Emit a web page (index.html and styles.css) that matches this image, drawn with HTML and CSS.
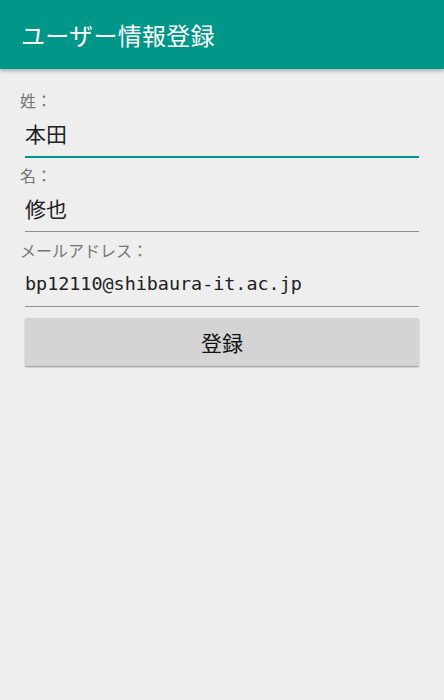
FILE: index.html
```html
<!DOCTYPE html>
<html lang="ja">
<head>
<meta charset="utf-8">
<link rel="stylesheet" href="styles.css">
</head>
<body>
<header class="appbar">
  <h1 class="title">ユーザー情報登録</h1>
</header>
<main class="form">
  <div class="field">
    <div class="label">姓：</div>
    <div class="input focused">本田</div>
  </div>
  <div class="field">
    <div class="label">名：</div>
    <div class="input">修也</div>
  </div>
  <div class="field">
    <div class="label">メールアドレス：</div>
    <div class="input mono">bp12110@shibaura-it.ac.jp</div>
  </div>
  <div class="button">登録</div>
</main>
</body>
</html>
```
FILE: styles.css
```css
* { box-sizing: border-box; }
html, body {
  margin: 0;
  padding: 0;
  background: #eeeeee;
  width: 444px;
  height: 700px;
  font-family: "Noto Sans CJK JP", "Noto Sans", sans-serif;
}
.appbar {
  height: 69px;
  background: #009688;
  box-shadow: 0 2px 4px rgba(0,0,0,0.28);
  display: flex;
  align-items: center;
  padding-left: 21px;
  position: relative;
  z-index: 1;
}
.title {
  margin: 0;
  color: #ffffff;
  font-weight: normal;
  font-size: 24px;
  line-height: 30px;
  letter-spacing: 0.3px;
}
.form {
  padding: 21px 25px 0 20px;
  display: flex;
  flex-direction: column;
}
.field {
  display: flex;
  flex-direction: column;
  margin-bottom: 7px;
}
.label {
  font-size: 16px;
  line-height: 20px;
  color: #757575;
}
.input {
  margin-left: 5px;
  height: 47px;
  display: flex;
  align-items: center;
  font-size: 21px;
  color: #212121;
  border-bottom: 1px solid #8e8e8e;
  margin-bottom: 1px;
}
.input.focused {
  height: 48px;
  border-bottom: 2px solid #009688;
  margin-bottom: 0;
}
.input.mono {
  font-family: "DejaVu Sans Mono", "Liberation Mono", monospace;
  font-size: 18.4px;
  letter-spacing: 0;
}
.button {
  margin-left: 5px;
  margin-top: 3px;
  height: 48px;
  background: #d4d4d4;
  box-shadow: 0 1.5px 1.5px rgba(0,0,0,0.3);
  display: flex;
  align-items: center;
  justify-content: center;
  font-size: 21px;
  color: #111111;
}
```
